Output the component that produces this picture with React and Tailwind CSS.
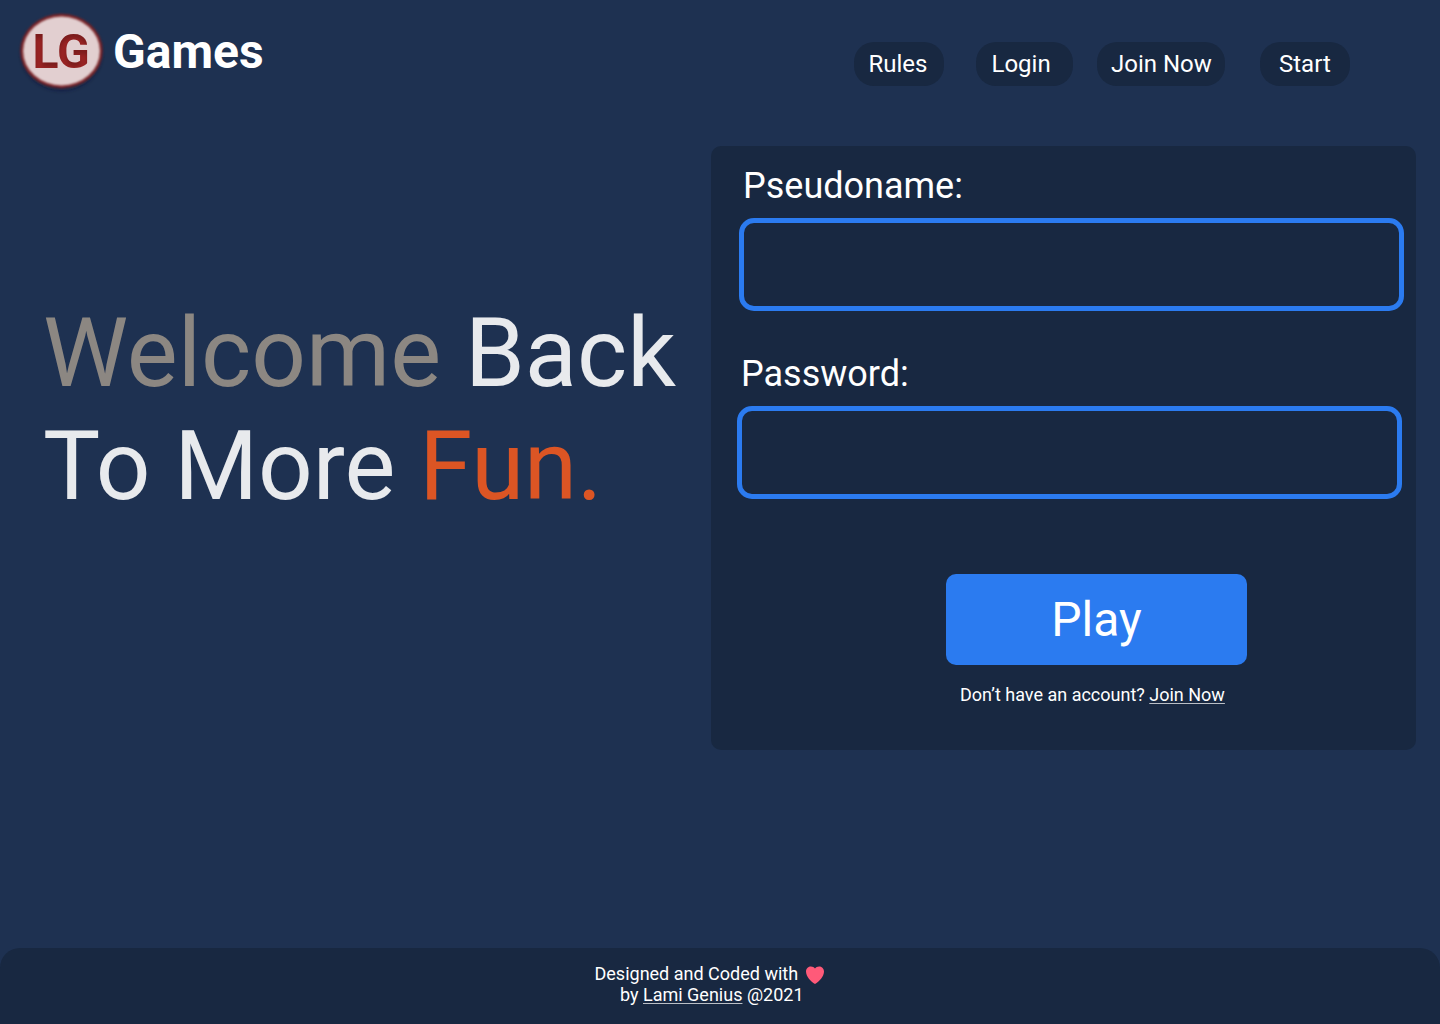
const pill = "flex h-11 items-center rounded-[20px] bg-[#182841] text-[24px] leading-7 whitespace-pre";

function Nav() {
  return (
    <nav className="flex pt-[42px]">
      <a className={pill + " w-[90px] pl-[14.5px]"}>Rules</a>
      <a className={pill + " ml-8 w-[97px] pl-[15.5px]"}>Login</a>
      <a className={pill + " ml-6 w-[128px] pl-[14px]"}>Join Now</a>
      <a className={pill + " ml-[35px] w-[90px] pl-[19px]"}>Start</a>
    </nav>
  );
}

function Logo() {
  return (
    <div className="flex pl-[18px] pt-[11px]">
      <svg className="overflow-visible" width="86" height="80">
        <defs>
          <filter id="shade" x="-20%" y="-20%" width="140%" height="140%">
            <feGaussianBlur stdDeviation="2" />
          </filter>
          <filter id="soft" x="-20%" y="-20%" width="140%" height="140%" colorInterpolationFilters="sRGB">
            <feGaussianBlur stdDeviation="1.2" />
          </filter>
          <filter id="inset" x="-10%" y="-10%" width="120%" height="120%" colorInterpolationFilters="sRGB">
            <feOffset in="SourceAlpha" dx="0" dy="4" result="moved" />
            <feGaussianBlur in="moved" stdDeviation="2" result="blurred" />
            <feComposite in="SourceAlpha" in2="blurred" operator="out" result="edge" />
            <feFlood floodColor="#000000" floodOpacity="0.22" />
            <feComposite in2="edge" operator="in" result="shadow" />
            <feMerge>
              <feMergeNode in="SourceGraphic" />
              <feMergeNode in="shadow" />
            </feMerge>
          </filter>
        </defs>
        <ellipse cx="43.5" cy="43" rx="40" ry="36.5" fill="#101a30" fillOpacity="0.5" filter="url(#shade)" />
        <ellipse cx="43.5" cy="40" rx="41.2" ry="37.2" fill="#7a2529" filter="url(#soft)" />
        <ellipse cx="43.5" cy="40" rx="38.4" ry="34.4" fill="#e2cfd0" filter="url(#soft)" />
        <text x="14.5" y="57" fontSize="48" fontWeight="700" fill="#9c2424" filter="url(#inset)">LG</text>
      </svg>
      <span className="ml-[9px] mt-[13px] text-[48px] font-bold leading-[56px]">Games</span>
    </div>
  );
}

export default function App() {
  return (
    <div className="flex h-[1024px] w-[1440px] flex-col overflow-hidden bg-[#1e3151] text-white" style={{ fontFamily: "Roboto, sans-serif" }}>
      <header className="flex h-[146px] justify-between pr-[90px]">
        <Logo />
        <Nav />
      </header>
      <main className="flex h-[802px]">
        <h1 className="w-[711px] whitespace-nowrap pl-[43px] pt-[151px] text-[96px] leading-[112.5px] text-[#e8eaed]">
          <span className="text-[#8c8782]">Welcome</span> Back
          <br />
          To More <span className="text-[#dc5524]">Fun.</span>
        </h1>
        <form className="flex h-[604px] w-[705px] flex-col rounded-[10px] bg-[#182841]">
          <label className="ml-8 mt-[19px] text-[36px] leading-[42px]">Pseudoname:</label>
          <input className="ml-7 mt-[11px] h-[93px] w-[665px] rounded-[15px] border-5 border-[#2b7bf0]" />
          <label className="ml-[30px] mt-[42px] text-[36px] leading-[42px]">Password:</label>
          <input className="ml-[26px] mt-[11px] h-[93px] w-[665px] rounded-[15px] border-5 border-[#2b7bf0]" />
          <button type="button" className="ml-[235px] mt-[75px] h-[91px] w-[301px] rounded-[10px] bg-[#2b7bf0] text-[48px] leading-[56px]">Play</button>
          <p className="ml-[249px] mt-[19px] text-[18px] leading-[21px]">
            Don’t have an account? <a className="underline decoration-white/70 underline-offset-2">Join Now</a>
          </p>
        </form>
      </main>
      <footer className="h-[76px] rounded-t-[20px] bg-[#182841] pt-[15px] text-[18px] leading-[21px]">
        <div className="flex pl-[594.5px]">
          <span>Designed and Coded with</span>
          <svg className="ml-[7.5px] mt-[3px]" width="19" height="18" viewBox="0 0 19 18">
            <path d="M9 2.4C10.700-.5 17.800-.900 18 5.500C18 10.500 13.200 15.500 9 18C4.800 15.500 0 10.500 0 5.500C.200-.900 7.300-.500 9 2.400Z" fill="#ff5a79" />
          </svg>
        </div>
        <p className="pl-[620px]">by <a className="underline decoration-white/70 underline-offset-2">Lami Genius</a> @2021</p>
      </footer>
    </div>
  );
}
